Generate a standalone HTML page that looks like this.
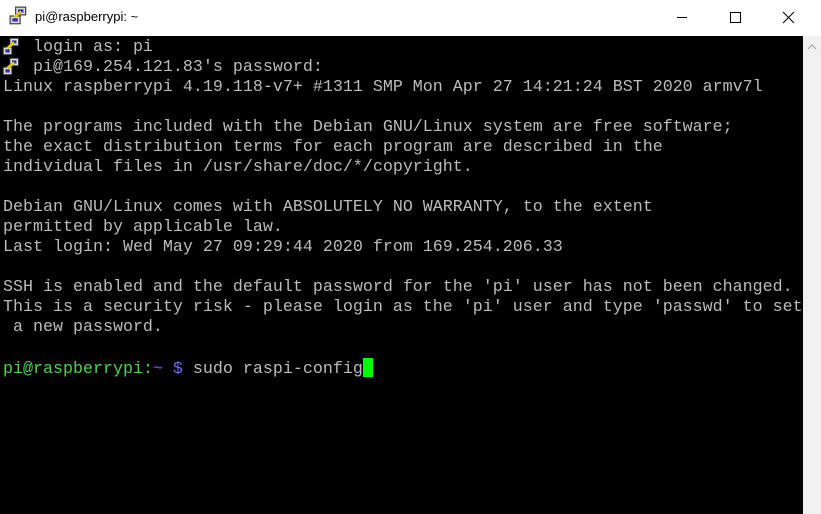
<!DOCTYPE html>
<html><head><meta charset="utf-8"><style>
body{margin:0;width:821px;height:514px;overflow:hidden;background:#fff;position:relative;font-family:"Liberation Sans",sans-serif}
#title{position:absolute;left:0;top:0;width:821px;height:36px;background:#fff}
#title .t{position:absolute;left:35px;top:9px;font-size:13px;color:#000}
#term{position:absolute;left:0;top:36px;width:803px;height:478px;background:#000}
#sb{position:absolute;left:803px;top:36px;width:18px;height:478px;background:#f0f0f0}
pre{margin:0;position:absolute;left:3px;top:2px;font-family:"Liberation Mono",monospace;font-size:16.67px;line-height:20px;color:#bbb}
.g{color:#4fd24f}.b{color:#6a6aff}
.cur{display:inline-block;width:10px;height:19px;background:#00ff00;vertical-align:-4px}
.ic{position:absolute}
</style></head><body>
<div id="title">
<svg class="ic" style="left:9px;top:6px" width="20" height="20" viewBox="0 0 18 18"><rect x="6" y="1" width="9" height="7" fill="#ddd" stroke="#333"/><rect x="8" y="3" width="5" height="3" fill="#33a"/><rect x="1" y="9" width="9" height="7" fill="#ddd" stroke="#333"/><rect x="3" y="11" width="5" height="3" fill="#33a"/><path d="M5 10 L11 5" stroke="#e8c800" stroke-width="2.5"/></svg>
<span class="t">pi@raspberrypi: ~</span>
<svg class="ic" style="left:677px;top:10px" width="130" height="16"><path d="M0 7.5H10" stroke="#000"/><rect x="53.5" y="2.5" width="10" height="10" fill="none" stroke="#000"/><path d="M106 2L117 13M117 2L106 13" stroke="#000"/></svg>
</div>
<div id="term">
<svg class="ic" style="left:2px;top:1px" width="20" height="40" viewBox="0 0 18 36"><g id="i"><rect x="7" y="1" width="8" height="7" fill="#ddd" stroke="#222"/><rect x="9" y="3" width="4" height="3" fill="#33a"/><rect x="1" y="9" width="8" height="7" fill="#ddd" stroke="#222"/><rect x="3" y="11" width="4" height="3" fill="#33a"/><path d="M5 10L11 5" stroke="#e8c800" stroke-width="2.5"/></g><use href="#i" y="18"/></svg>
<pre>   login as: pi
   pi@169.254.121.83's password:
Linux raspberrypi 4.19.118-v7+ #1311 SMP Mon Apr 27 14:21:24 BST 2020 armv7l

The programs included with the Debian GNU/Linux system are free software;
the exact distribution terms for each program are described in the
individual files in /usr/share/doc/*/copyright.

Debian GNU/Linux comes with ABSOLUTELY NO WARRANTY, to the extent
permitted by applicable law.
Last login: Wed May 27 09:29:44 2020 from 169.254.206.33

SSH is enabled and the default password for the 'pi' user has not been changed.
This is a security risk - please login as the 'pi' user and type 'passwd' to set
 a new password.

<span class="g">pi@raspberrypi:</span><span class="b">~ $</span> sudo raspi-config<span class="cur"></span></pre>
</div>
<div id="sb"><svg class="ic" style="left:4px;top:8px" width="10" height="6"><path d="M1 5L5 1L9 5" stroke="#a0a0a0" fill="none"/></svg></div>
</body></html>
